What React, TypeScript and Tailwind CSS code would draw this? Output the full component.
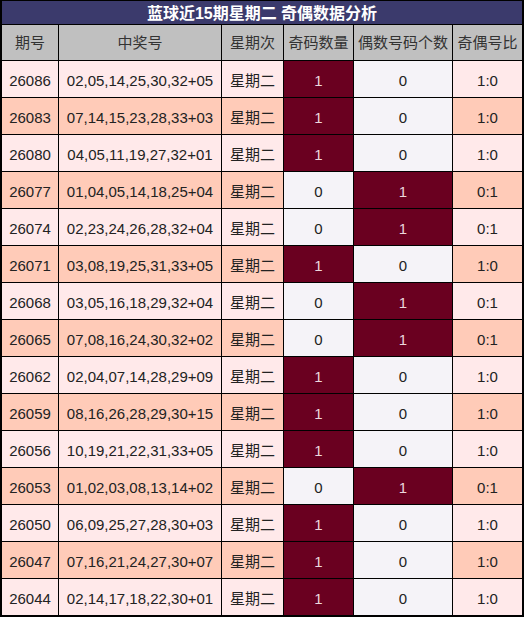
import React from "react";

const rows: [string, string, number][] = [
  ["26086", "02,05,14,25,30,32+05", 1],
  ["26083", "07,14,15,23,28,33+03", 1],
  ["26080", "04,05,11,19,27,32+01", 1],
  ["26077", "01,04,05,14,18,25+04", 0],
  ["26074", "02,23,24,26,28,32+04", 0],
  ["26071", "03,08,19,25,31,33+05", 1],
  ["26068", "03,05,16,18,29,32+04", 0],
  ["26065", "07,08,16,24,30,32+02", 0],
  ["26062", "02,04,07,14,28,29+09", 1],
  ["26059", "08,16,26,28,29,30+15", 1],
  ["26056", "10,19,21,22,31,33+05", 1],
  ["26053", "01,02,03,08,13,14+02", 0],
  ["26050", "06,09,25,27,28,30+03", 1],
  ["26047", "07,16,21,24,27,30+07", 1],
  ["26044", "02,14,17,18,22,30+01", 1],
];

const font = { fontFamily: '"Liberation Sans", "Noto Sans CJK SC", sans-serif' };

export default function App() {
  return (
    <div className="w-[524px] h-[617px] bg-black border-x-2 border-t border-b-2 border-black" style={font}>
      <div className="grid grid-cols-[56px_162px_61px_69px_98px_69px] gap-px bg-black">
        <div className="col-span-6 h-[23px] pt-[2px] bg-[#3b3a6c] flex items-center justify-center text-white font-bold text-[16px]">
          蓝球近15期星期二 奇偶数据分析
        </div>
        {["期号", "中奖号", "星期次", "奇码数量", "偶数号码个数", "奇偶号比"].map((h) => (
          <div key={h} className="h-[35px] pt-[2px] bg-[#c0c0c0] flex items-center justify-center text-[15px] text-[#333]">
            {h}
          </div>
        ))}
        {rows.map(([id, nums, odd], i) => {
          const bg = i % 2 === 1 ? "bg-[#ffcbb8]" : "bg-[#ffe9ea]";
          const cell = "h-[36px] pt-[4px] flex items-center justify-center text-[15px] text-[#222]";
          return (
            <React.Fragment key={id}>
              <div className={`${cell} ${bg}`}>{id}</div>
              <div className={`${cell} ${bg}`}>{nums}</div>
              <div className={`${cell} ${bg}`}>星期二</div>
              <div className={odd ? `${cell} bg-[#6a0020] !text-[#ecd7dc]` : `${cell} bg-[#f5f3f8]`}>{odd}</div>
              <div className={!odd ? `${cell} bg-[#6a0020] !text-[#ecd7dc]` : `${cell} bg-[#f5f3f8]`}>{odd ? 0 : 1}</div>
              <div className={`${cell} ${bg}`}>{odd ? "1:0" : "0:1"}</div>
            </React.Fragment>
          );
        })}
      </div>
    </div>
  );
}
